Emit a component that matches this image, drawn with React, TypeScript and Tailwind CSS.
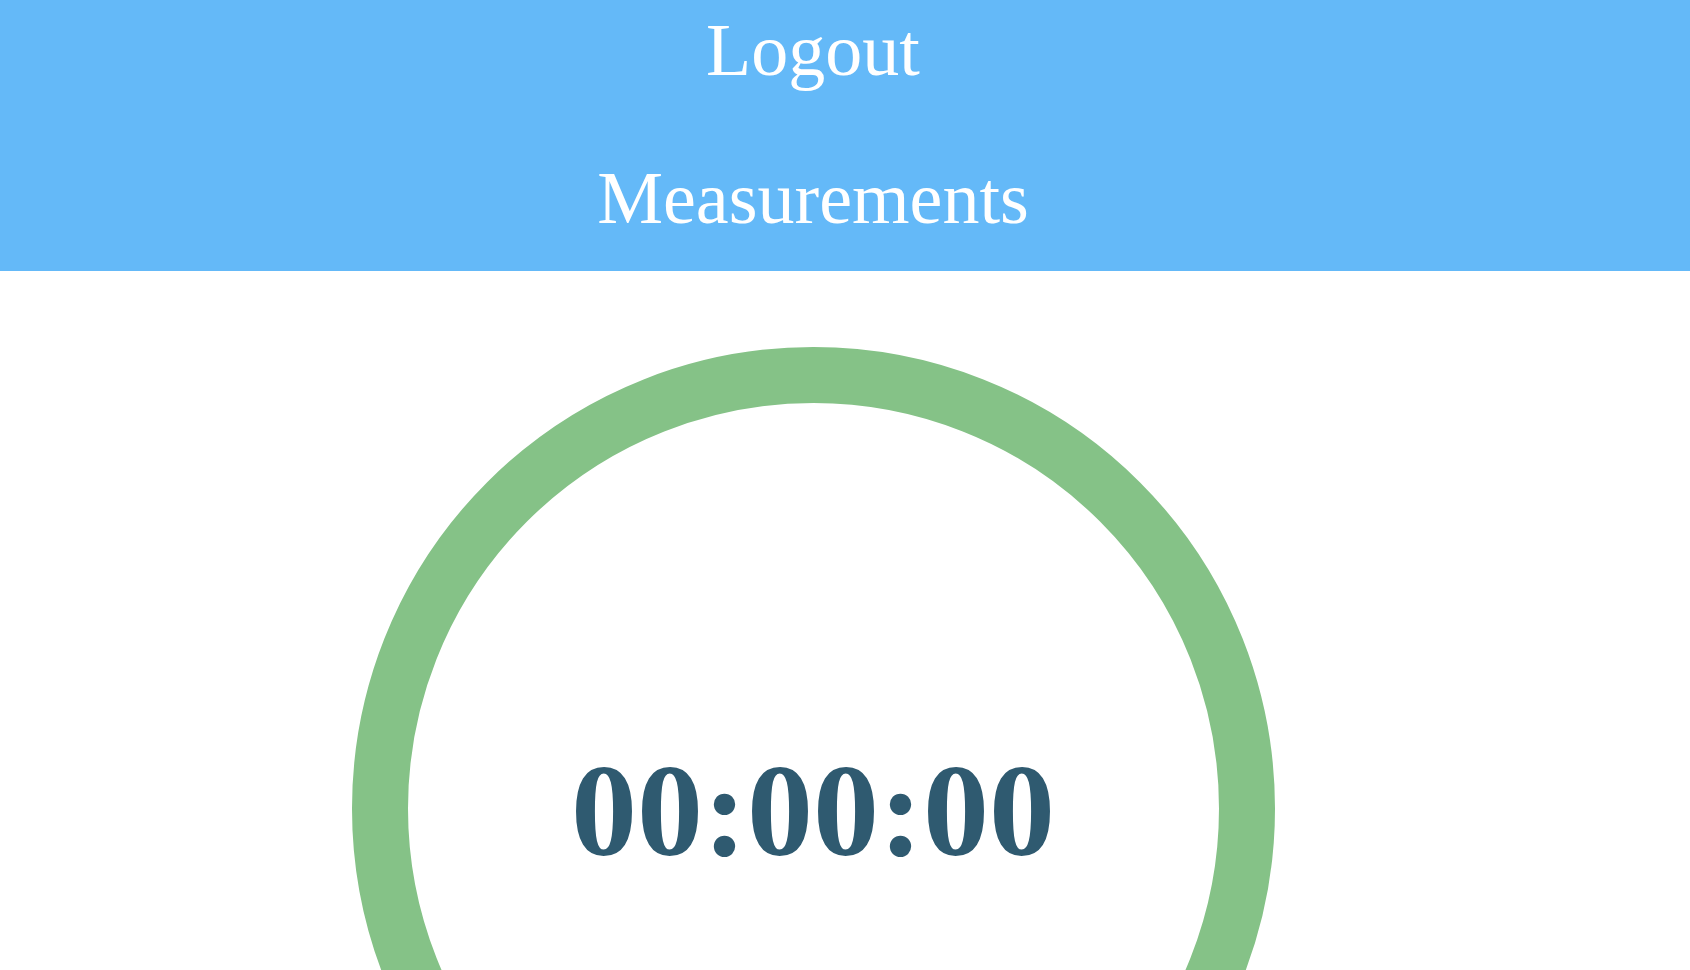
import React from "react";

export default function App() {
  return (
    <div
      className="w-[1690px] h-[970px] overflow-hidden bg-white"
      style={{ fontFamily: '"Liberation Serif", "Times New Roman", serif' }}
    >
      <header className="bg-[#64b9f8] w-full pt-[13px] pb-[36px]">
        <nav className="w-[1626px] flex flex-col items-center gap-[74px] text-white text-[74px] leading-[74px]">
          <a className="block h-[74px]">Logout</a>
          <a className="block h-[74px]">Measurements</a>
        </nav>
      </header>
      <main className="w-[1626px] flex justify-center pt-[76px]">
        <div className="relative w-[923px] h-[923px] shrink-0">
          <svg width="923" height="923" viewBox="0 0 923 923" className="block">
            <circle cx="461.5" cy="461.5" r="433.5" fill="none" stroke="#85c287" strokeWidth="56" />
          </svg>
          <div className="absolute inset-0 flex items-center justify-center">
            <span className="text-[132px] font-bold leading-none text-[#2f5a70] pt-[4px]">00:00:00</span>
          </div>
        </div>
      </main>
    </div>
  );
}
